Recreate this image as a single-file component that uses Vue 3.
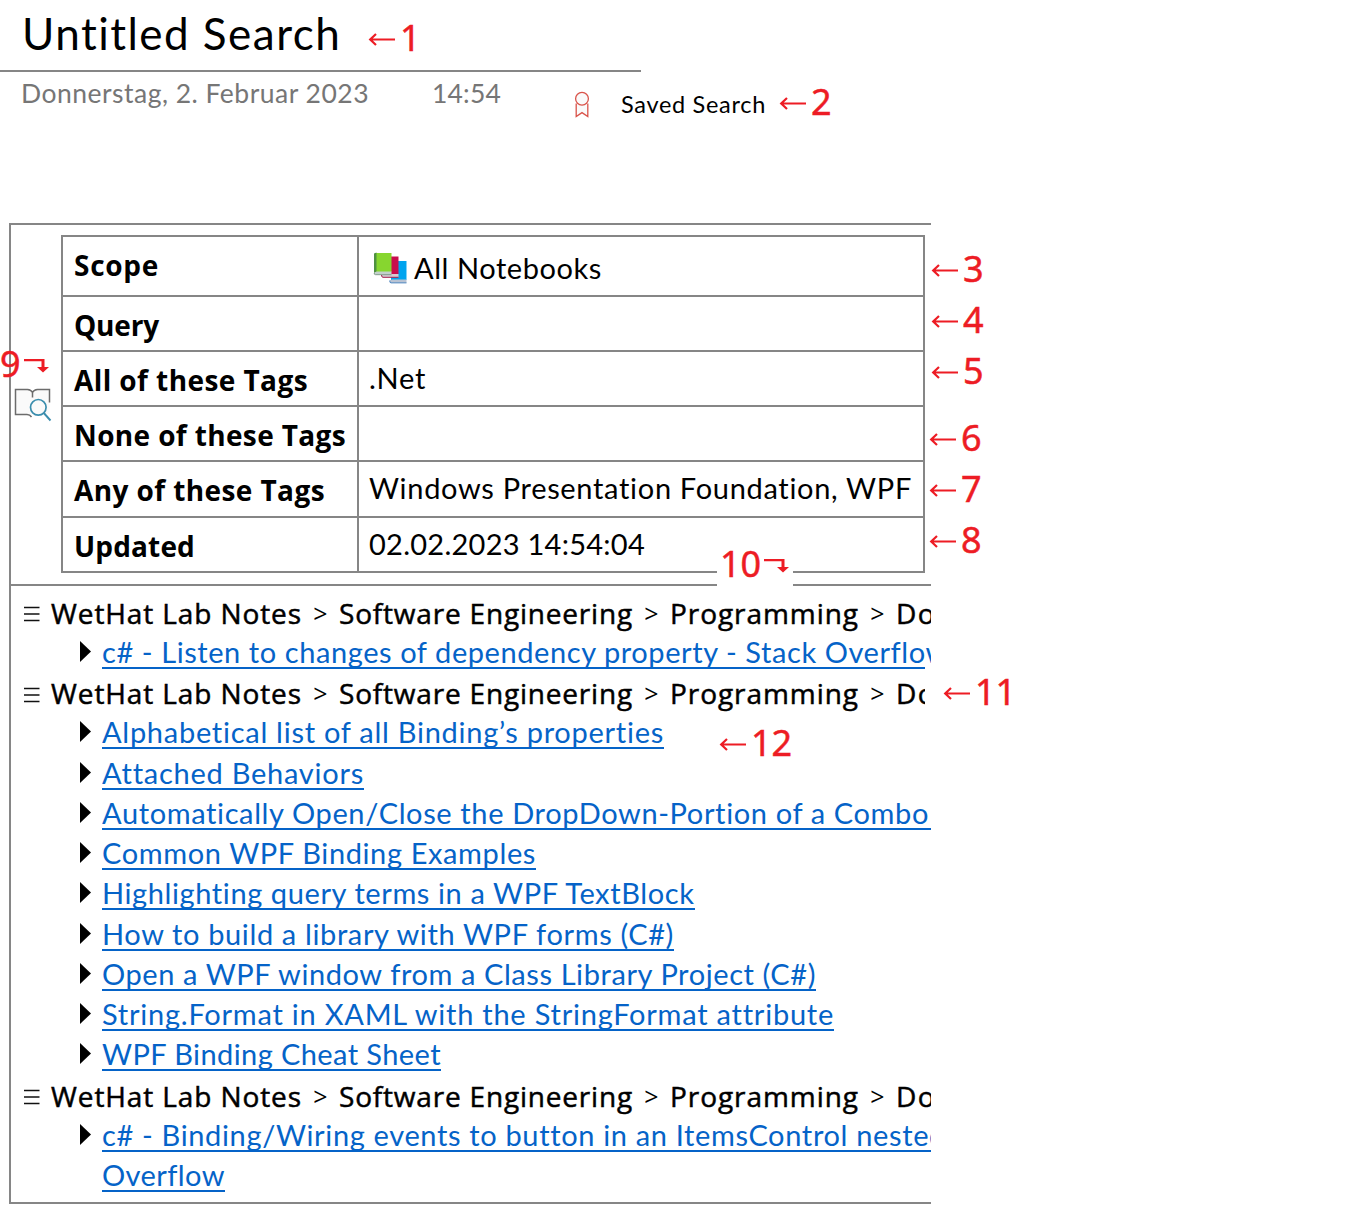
<script setup>
// Spreads the tracking of a text so that it takes the given width.
const vFit = {
  mounted(el, { value }) {
    if (!value) return
    const natural = el.getBoundingClientRect().width
    el.style.letterSpacing = (value - natural) / el.textContent.length + 'px'
  },
}

const fields = [
  { label: 'Scope', lw: 85, value: 'All Notebooks', vw: 188, icon: true, h: 60 },
  { label: 'Query', lw: 85, value: '', vw: 0, h: 55 },
  { label: 'All of these Tags', lw: 234, value: '.Net', vw: 57, h: 55 },
  { label: 'None of these Tags', lw: 272, value: '', vw: 0, h: 55 },
  { label: 'Any of these Tags', lw: 251, value: 'Windows Presentation Foundation, WPF', vw: 544, h: 56 },
  { label: 'Updated', lw: 121, value: '02.02.2023 14:54:04', vw: 276, h: 55 },
]

const crumbs = [
  { t: 'WetHat Lab Notes', w: 251 },
  { t: 'Software Engineering', w: 294 },
  { t: 'Programming', w: 189 },
  { t: 'Do', w: 40 },
]

const groups = [
  [{ lines: [['c# - Listen to changes of dependency property - Stack Overflow', 847]] }],
  [
    { lines: [['Alphabetical list of all Binding’s properties', 563]] },
    { lines: [['Attached Behaviors', 261]] },
    { lines: [['Automatically Open/Close the DropDown-Portion of a Combo', 828]], wide: true },
    { lines: [['Common WPF Binding Examples', 434]] },
    { lines: [['Highlighting query terms in a WPF TextBlock', 593]] },
    { lines: [['How to build a library with WPF forms (C#)', 572]] },
    { lines: [['Open a WPF window from a Class Library Project (C#)', 714]] },
    { lines: [['String.Format in XAML with the StringFormat attribute', 731]] },
    { lines: [['WPF Binding Cheat Sheet', 339]] },
  ],
  [{ lines: [['c# - Binding/Wiring events to button in an ItemsControl nested', 843], ['Overflow', 123]] }],
]

const notes = [
  { n: 1, x: 368, y: 40 },
  { n: 2, x: 779, y: 104 },
  { n: 3, x: 931, y: 271 },
  { n: 4, x: 931, y: 322 },
  { n: 5, x: 931, y: 373 },
  { n: 6, x: 929, y: 440 },
  { n: 7, x: 929, y: 491 },
  { n: 8, x: 929, y: 542 },
  { n: 11, x: 943, y: 694 },
  { n: 12, x: 719, y: 745 },
]
const turns = [
  { n: 9, x: 0, y: 366 },
  { n: 10, x: 720, y: 566 },
]
</script>

<template>
  <main class="page">
    <header class="head">
      <h1 class="title"><span v-fit="320">Untitled Search</span></h1>
      <div class="meta">
        <span class="date"><span v-fit="348">Donnerstag, 2. Februar 2023</span></span>
        <span class="time"><span v-fit="69">14:54</span></span>
        <svg class="badge" width="16" height="28" viewBox="0 0 16 28" fill="#fafafa" stroke="#d9534a" stroke-width="1.3">
          <path d="M2.2 12.5V25.6L8 21.6L13.8 25.6V12.5" />
          <circle cx="8" cy="7.7" r="6.4" />
        </svg>
        <span class="saved"><span v-fit="145">Saved Search</span></span>
      </div>
    </header>

    <section class="box">
      <div class="summary">
        <div class="gutter">
          <svg width="38" height="36" viewBox="0 0 38 36" fill="none">
            <path d="M1.5 1.5H14Q18 2 18.500 4.500Q19 2 23 1.500H35.500V26H1.500Z" fill="#fafafa" />
            <path d="M17.500 29Q16 26.500 13 26.500H1.500V1.500H13.500Q17 1.800 18.500 4.500Q20 1.800 23.500 1.500H35.500V14.500M18.500 4.500V9.500" stroke="#6c6c6c" stroke-width="1.500" />
            <circle cx="24.300" cy="19.300" r="7.800" fill="#fafafa" stroke="#3a8dad" stroke-width="1.700" />
            <path d="M29.800 25L36.500 32.500" stroke="#3a8dad" stroke-width="1.900" />
          </svg>
        </div>
        <div class="table">
          <div v-for="f in fields" :key="f.label" class="row" :style="{ height: f.h + 'px' }">
            <div class="label"><span v-fit="f.lw">{{ f.label }}</span></div>
            <div class="value" :class="{ scope: f.icon }">
              <svg v-if="f.icon" class="books" width="36" height="32" viewBox="0 0 36 32">
                <path d="M18 9H33.500V28H18Z" fill="#00a4ef" />
                <path d="M16.500 28.500L19 27.500H33.500V31H18Q16.500 31 16.500 28.500Z" fill="#b9c3d3" />
                <path d="M16.800 28.500Q16.500 30.800 18 30.900H33.500" fill="none" stroke="#3478bd" stroke-width=".8" />
                <path d="M9 4.500H25.500V22H9Z" fill="#c80d4c" />
                <path d="M8.500 23L11 22H25.500V25.500H10Q8.500 25.500 8.500 23Z" fill="#d5cbd2" />
                <path d="M8.500 23Q8.500 25.300 10 25.300H25.500" fill="none" stroke="#a10b3d" stroke-width=".9" />
                <path d="M2 1H18.500V20H2Z" fill="#87d62f" />
                <path d="M1 1.500L3.500 .5V20L1 21Z" fill="#4e9140" />
                <path d="M1 21L3.500 19.500H18.500V22.800H2.500Q1 22.800 1 21Z" fill="#c3cfcc" />
                <path d="M1.200 21Q1 22.600 2.500 22.700H18.500" fill="none" stroke="#60806b" stroke-width=".7" />
              </svg>
              <span v-if="f.value" v-fit="f.vw">{{ f.value }}</span>
            </div>
          </div>
        </div>
      </div>

      <div class="results">
        <div v-for="(g, i) in groups" :key="i">
          <div class="crumbs">
            <svg class="bars" width="16" height="16" viewBox="0 0 16 16" stroke="#111" stroke-width="1.300">
              <path d="M0 1.500H15.500M0 8H15.500M0 14.500H15.500" />
            </svg>
            <template v-for="(c, j) in crumbs" :key="c.t">
              <span v-if="j" class="sep">&gt;</span>
              <span class="crumb" :style="{ width: c.w + 'px' }"><span v-fit="c.w">{{ c.t }}</span></span>
            </template>
          </div>
          <div v-for="(l, k) in g" :key="k" class="item">
            <svg class="mark" width="11" height="21" viewBox="0 0 11 21"><path d="M0 0L11 10.500L0 21Z" /></svg>
            <div>
              <div v-for="s in l.lines" :key="s[0]" class="line">
                <a class="link" :class="{ wide: l.wide }"><span v-fit="s[1]">{{ s[0] }}</span></a>
              </div>
            </div>
          </div>
        </div>
      </div>
    </section>

    <i class="cover cover-line"></i>
    <i class="cover cover-edge"></i>
    <div v-for="a in notes" :key="a.n" class="note" :style="{ left: a.x + 'px', top: a.y - 20 + 'px' }">
      <svg width="27" height="14" viewBox="0 0 27 14" fill="none" stroke="#ed1c24" stroke-width="2.200">
        <path d="M27 6.500H2M8 1L2.200 6.500L8 12" />
      </svg>
      <span class="num">{{ a.n }}</span>
    </div>
    <div v-for="a in turns" :key="a.n" class="note turn" :style="{ left: a.x + 'px', top: a.y - 22 + 'px' }">
      <span>{{ a.n }}</span>
      <svg width="25" height="14" viewBox="0 0 25 14">
        <path d="M0 0H20.500V8H25L19 13.500L13 8H17.500V2.200H0Z" fill="#ed1c24" />
      </svg>
    </div>
  </main>
</template>

<style>
body { margin: 0; background: #fff; }
</style>

<style scoped>
.page {
  position: relative;
  width: 1364px;
  height: 1216px;
  overflow: hidden;
  background: #fff;
  color: #000;
  font: 29px/40px Lato, "Open Sans", sans-serif;
  white-space: nowrap;
}
.head { height: 223px; }
.title {
  box-sizing: border-box;
  width: 641px;
  height: 72px;
  margin: 0;
  padding-left: 22px;
  border-bottom: 2px solid #868686;
  font-size: 44px;
  font-weight: 400;
  line-height: 67px;
}
.meta { display: flex; align-items: flex-start; padding-left: 21px; }
.date, .time { color: #767676; font-size: 26.5px; line-height: 42px; }
.date { width: 411px; }
.time { width: 142px; }
.badge { margin: 19px 31px 0 0; }
.saved { font-size: 23.5px; line-height: 65px; }
.box {
  box-sizing: border-box;
  width: 922px;
  height: 981px;
  margin-left: 9px;
  border: solid #868686;
  border-width: 2px 0 2px 2px;
  overflow: hidden;
}
.summary { display: flex; height: 359px; border-bottom: 2px solid #868686; }
.gutter { width: 50px; }
.gutter svg { display: block; margin: 163px 0 0 3px; }
.table {
  box-sizing: border-box;
  width: 864px;
  height: 338px;
  margin-top: 10px;
  border: 2px solid #868686;
  border-bottom: 0;
}
.row { display: flex; box-sizing: border-box; border-bottom: 2px solid #868686; }
.label {
  box-sizing: border-box;
  width: 296px;
  padding: 8px 0 0 11px;
  border-right: 2px solid #868686;
  font-family: "Open Sans", "Noto Sans", sans-serif;
  font-size: 28px;
  font-weight: 700;
}
.value { display: flex; padding: 6px 0 0 10px; }
.value.scope { padding: 11px 0 0 14px; }
.books { margin: 4px 5px 0 0; }
.results { padding-top: 6.6px; }
.crumbs {
  display: flex;
  align-items: center;
  height: 40.25px;
  padding-left: 13px;
  font-family: "Open Sans", "Noto Sans", sans-serif;
  font-size: 28px;
  font-weight: 500;
  -webkit-text-stroke: 0.5px #000;
}
.bars { flex: none; margin: 3px 11px 0 0; }
.crumb { flex: none; }
.sep { flex: none; width: 37px; text-align: center; font-size: 25px; font-weight: 400; -webkit-text-stroke: 0; }
.item { display: flex; padding-left: 69px; }
.mark { flex: none; margin: 8px 11px 0 0; }
.line { height: 40.25px; }
.link {
  display: inline-block;
  height: 34px;
  border-bottom: 2px solid #0563c8;
  color: #0563c8;
  line-height: 38px;
  overflow: hidden;
  vertical-align: top;
}
.link.wide { padding-right: 20px; }
.note {
  position: absolute;
  display: flex;
  align-items: center;
  height: 40px;
  color: #ed1c24;
  font: 36px/40px "Noto Sans", "Open Sans", sans-serif;
  -webkit-text-stroke: 0.5px #ed1c24;
}
.num { margin: -4px 0 0 5px; }
.turn svg { margin: 4px 0 0 3px; }
.cover { position: absolute; background: #fff; }
.cover-line { left: 717px; top: 545px; width: 76px; height: 44px; }
.cover-edge { left: 925px; top: 667px; width: 90px; height: 50px; }
</style>
